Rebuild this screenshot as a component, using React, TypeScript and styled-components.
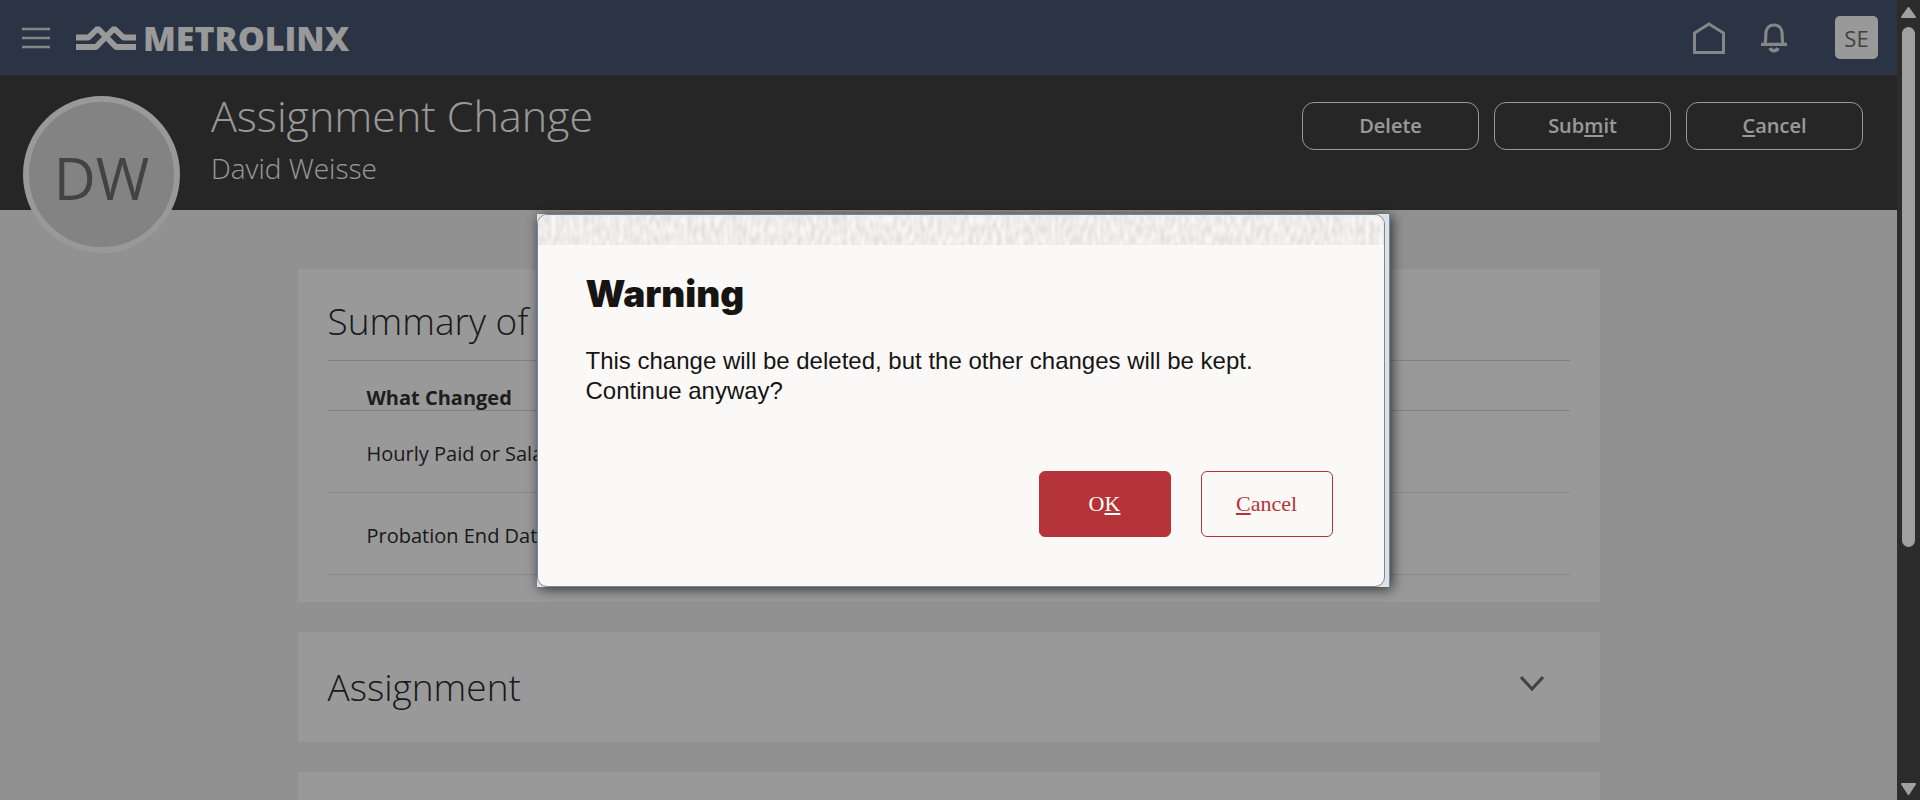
import React from "react";
import styled, { createGlobalStyle } from "styled-components";

const GlobalStyle = createGlobalStyle`
  *, *::before, *::after { box-sizing: border-box; }
  body {
    margin: 0;
    background: #f2f2f2;
    font-family: "Open Sans", "Noto Sans", sans-serif;
    color: #2c2c2c;
  }
  button { font: inherit; cursor: pointer; }
  h1, h2, p { margin: 0; }
`;

const Screen = styled.div`
  display: flex;
  height: 100vh;
  overflow: hidden;
`;

const Page = styled.div`
  flex: 1;
  min-width: 0;
  overflow: hidden;
`;

const TopBar = styled.header`
  display: flex;
  align-items: center;
  height: 75px;
  padding: 0 19px 0 22px;
  background: #465873;
`;

const IconButton = styled.button`
  display: flex;
  padding: 0;
  border: 0;
  background: none;
  color: #dcdfe3;
`;

const Brand = styled.a`
  display: flex;
  align-items: center;
  gap: 7px;
  margin-left: 26px;
  color: #fff;
  text-decoration: none;
  font-weight: 800;
  font-size: 34px;
  line-height: 40px;
`;

const TopActions = styled.nav`
  display: flex;
  align-items: center;
  gap: 36px;
  margin-left: auto;
`;

const UserBadge = styled.button`
  width: 43px;
  height: 43px;
  margin-left: 12px;
  padding: 0;
  border: 0;
  border-radius: 5px;
  background: #fff;
  color: #6f6f6f;
  font-size: 22px;
  line-height: 42px;
`;

const Banner = styled.section`
  display: flex;
  align-items: flex-start;
  height: 135px;
  padding: 21px 34px 0 23px;
  background: #404040;
  color: #fff;
`;

const Avatar = styled.div`
  flex: none;
  width: 157px;
  height: 157px;
  border: 6px solid #fff;
  border-radius: 50%;
  background: #dadada;
  color: #707070;
  font-size: 58px;
  line-height: 152px;
  text-align: center;
`;

const BannerTitles = styled.div`
  margin-left: 31px;
`;

const PageTitle = styled.h1`
  margin-top: -10px;
  font-weight: 300;
  font-size: 43px;
  line-height: 60px;
`;

const PersonName = styled.p`
  font-weight: 300;
  font-size: 28px;
  line-height: 44px;
`;

const BannerActions = styled.div`
  display: flex;
  gap: 15px;
  margin: 6px 0 0 auto;
`;

const OutlineButton = styled.button`
  width: 177px;
  height: 48px;
  padding: 0;
  border: 1px solid #fff;
  border-radius: 12px;
  background: none;
  color: #fff;
  font-weight: 600;
  font-size: 20px;
  line-height: 44px;
`;

const AccessKey = styled.span`
  text-decoration: underline;
  text-decoration-thickness: 2px;
  text-underline-offset: 2px;
  text-decoration-skip-ink: none;
`;

const Content = styled.main`
  display: flex;
  flex-direction: column;
  gap: 30px;
  max-width: 1302px;
  margin: 59px auto 0;
`;

const Card = styled.section`
  padding: 24px 30px 27px;
  background: #fff;
`;

const CollapsedCard = styled(Card)`
  display: flex;
  align-items: flex-start;
  justify-content: space-between;
  height: 110px;
  padding: 27px 56px 0 30px;

  & > button { padding-top: 17px; }
`;

const CardTitle = styled.h2`
  font-weight: 300;
  font-size: 37px;
  line-height: 56px;
`;

const ChangesTable = styled.table`
  width: 100%;
  margin-top: 11px;
  border-collapse: collapse;
  border-top: 1px solid #d2dbe2;
  font-size: 20px;
  line-height: 24px;
  text-align: left;
`;

const HeadCell = styled.th`
  height: 50px;
  padding: 0 39px;
  border-bottom: 1px solid #d5dade;
  color: #333;
  vertical-align: bottom;
`;

const Cell = styled.td`
  height: 82px;
  padding: 5px 39px 0;
  border-bottom: 1px solid #e4e4e4;
`;

const Scrollbar = styled.div`
  display: flex;
  flex-direction: column;
  align-items: center;
  gap: 9px;
  width: 23px;
  padding: 7px 0 5px;
  background: #2c2c2c;
  position: relative;
  z-index: 2;
`;

const Thumb = styled.div`
  width: 13px;
  height: 66%;
  margin-bottom: auto;
  border-radius: 7px;
  background: #a0a0a0;
`;

const Scrim = styled.div`
  position: fixed;
  inset: 0;
  z-index: 1;
  display: grid;
  place-items: center;
  padding: 0 0 0 6px;
  background: rgba(0, 0, 0, 0.4);
`;

const DialogShell = styled.div`
  width: 853px;
  padding-right: 4px;
  border-right: 1px solid #6e8ba6;
  background: #dfe2e5;
  box-shadow: 2px 2px 12px rgba(0, 0, 0, 0.7);
`;

const Dialog = styled.div`
  overflow: hidden;
  border: 1px solid #6e8ba6;
  border-radius: 10px;
  background: #fbf9f8;
  color: #161513;
  font-family: "Liberation Sans", Arial, sans-serif;
`;

const Texture = styled.svg`
  display: block;
  width: 100%;
  height: 30px;
`;

const DialogBody = styled.div`
  padding: 27px 51px 49px 48px;
`;

const DialogTitle = styled.h2`
  font: 900 37px/44px Inter, sans-serif;
`;

const Message = styled.p`
  max-width: 680px;
  margin-top: 30px;
  font-size: 24px;
  line-height: 30px;
`;

const DialogActions = styled.div`
  display: flex;
  justify-content: flex-end;
  gap: 30px;
  margin-top: 65px;
`;

const DialogButton = styled.button<{ $primary?: boolean }>`
  width: 132px;
  height: 66px;
  padding: 0;
  border: 1px solid #b53439;
  border-radius: 6px;
  background: ${(p) => (p.$primary ? "#b53439" : "transparent")};
  color: ${(p) => (p.$primary ? "#fff" : "#b53439")};
  font: 22px/64px "Liberation Serif", "Times New Roman", serif;
`;

const changes = ["Hourly Paid or Salaried", "Probation End Date"];

export default function App() {
  return (
    <>
      <GlobalStyle />
      <Screen>
        <Page>
          <TopBar>
            <IconButton aria-label="Navigator">
              <svg width="28" height="24" viewBox="0 0 28 24" stroke="currentColor" strokeWidth="2.6">
                <path d="M0 3h28M0 12h28M0 21h28" />
              </svg>
            </IconButton>
            <Brand href="#">
              <svg width="60" height="26" viewBox="0 0 60 26" fill="none" stroke="currentColor" strokeWidth="5.8" strokeLinejoin="bevel">
                <path d="M0 12.500h12.500L21.800 3.500 40 22H60" />
                <path d="M60 12.500H47.500L38.200 3.500 20 22H0" />
              </svg>
              METROLINX
            </Brand>
            <TopActions>
              <IconButton aria-label="Home">
                <svg width="32" height="32" viewBox="0 0 32 32" fill="none" stroke="currentColor" strokeWidth="3">
                  <path d="M1.500 30.500V11L16 2l14.500 9v19.500z" />
                </svg>
              </IconButton>
              <IconButton aria-label="Notifications">
                <svg width="26" height="30" viewBox="0 0 26 30" fill="none" stroke="currentColor" strokeWidth="3.200">
                  <path d="M0 21.300h26M4 21c.8-3 .8-6 .8-9.500C4.800 5.500 8 2 13 2s8.200 3.500 8.200 9.500c0 3.500 0 6.500.8 9.500" />
                  <path d="M9 25c1.500 3.600 6.500 3.600 8 0" strokeWidth="3.600" />
                </svg>
              </IconButton>
              <UserBadge aria-label="Settings and actions">SE</UserBadge>
            </TopActions>
          </TopBar>
          <Banner>
            <Avatar>DW</Avatar>
            <BannerTitles>
              <PageTitle>Assignment Change</PageTitle>
              <PersonName>David Weisse</PersonName>
            </BannerTitles>
            <BannerActions>
              <OutlineButton>Delete</OutlineButton>
              <OutlineButton>Sub<AccessKey>m</AccessKey>it</OutlineButton>
              <OutlineButton><AccessKey>C</AccessKey>ancel</OutlineButton>
            </BannerActions>
          </Banner>
          <Content>
            <Card>
              <CardTitle>Summary of</CardTitle>
              <ChangesTable>
                <thead>
                  <tr><HeadCell scope="col">What Changed</HeadCell></tr>
                </thead>
                <tbody>
                  {changes.map((change) => (
                    <tr key={change}><Cell>{change}</Cell></tr>
                  ))}
                </tbody>
              </ChangesTable>
            </Card>
            <CollapsedCard>
              <CardTitle>Assignment</CardTitle>
              <IconButton aria-label="Expand Assignment">
                <svg width="24" height="16" viewBox="0 0 24 16" fill="none" stroke="#6b6d70" strokeWidth="3">
                  <path d="M1 1l11 12L23 1" />
                </svg>
              </IconButton>
            </CollapsedCard>
            <CollapsedCard />
          </Content>
        </Page>
        <Scrollbar aria-hidden="true">
          <svg width="15" height="11" viewBox="0 0 15 11" fill="#a0a0a0" stroke="#a0a0a0" strokeWidth="2" strokeLinejoin="round">
            <path d="M7.500 1L14 10H1z" />
          </svg>
          <Thumb />
          <svg width="15" height="12" viewBox="0 0 15 12" fill="#a0a0a0" stroke="#a0a0a0" strokeWidth="2" strokeLinejoin="round">
            <path d="M7.500 11L14 1H1z" />
          </svg>
        </Scrollbar>
      </Screen>
      <Scrim>
        <DialogShell>
          <Dialog role="alertdialog" aria-modal="true" aria-labelledby="warning-title" aria-describedby="warning-text">
            <Texture aria-hidden="true">
              <filter id="grain" x="0" y="0" width="100%" height="100%" colorInterpolationFilters="sRGB">
                <feTurbulence type="fractalNoise" baseFrequency="0.22 0.1" numOctaves="1" seed="4" />
                <feColorMatrix values="0.17 0 0 0 0.85  0.17 0 0 0 0.843  0.17 0 0 0 0.838  0 0 0 0 1" />
              </filter>
              <rect width="100%" height="30" filter="url(#grain)" />
            </Texture>
            <DialogBody>
              <DialogTitle id="warning-title">Warning</DialogTitle>
              <Message id="warning-text">
                This change will be deleted, but the other changes will be kept. Continue anyway?
              </Message>
              <DialogActions>
                <DialogButton $primary>O<AccessKey>K</AccessKey></DialogButton>
                <DialogButton><AccessKey>C</AccessKey>ancel</DialogButton>
              </DialogActions>
            </DialogBody>
          </Dialog>
        </DialogShell>
      </Scrim>
    </>
  );
}
